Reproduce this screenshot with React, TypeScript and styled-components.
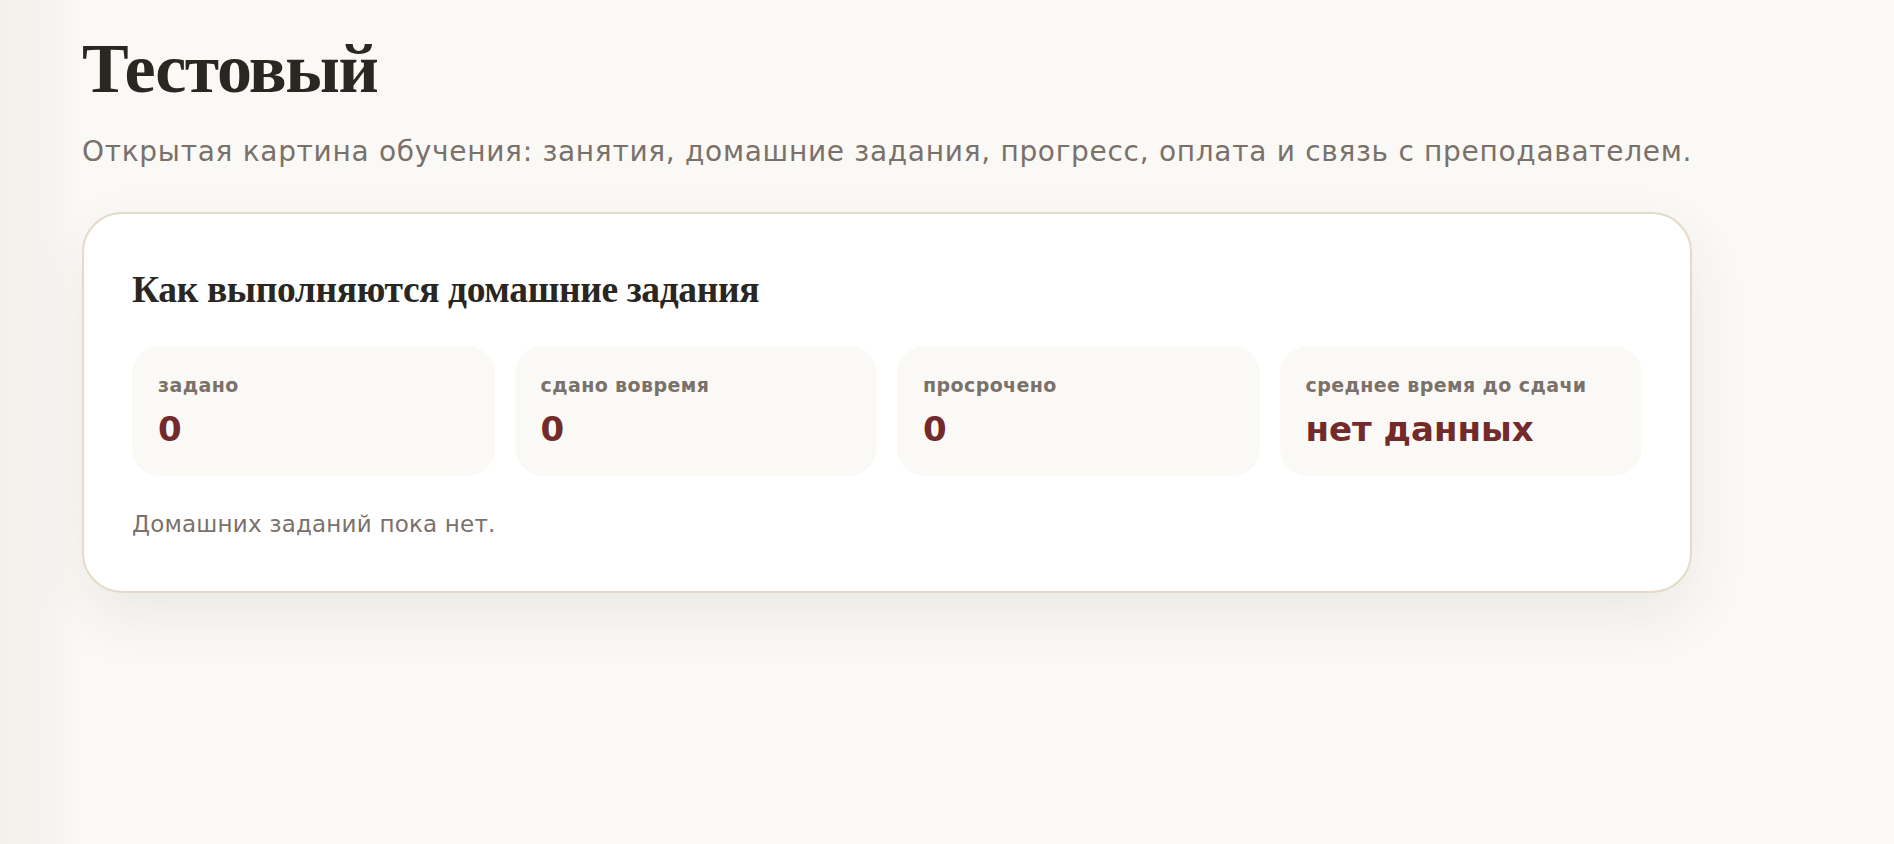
import styled, { createGlobalStyle } from 'styled-components';

const GlobalStyle = createGlobalStyle`
  html, body {
    margin: 0;
    padding: 0;
    min-height: 100%;
  }

  body {
    background: linear-gradient(90deg, #f3f1ec 0px, #f5f3ef 45px, #f9f8f4 72px, #faf9f6 84px, #faf9f6 100%);
    min-height: 844px;
    font-family: 'DejaVu Sans', 'Open Sans', sans-serif;
  }
`;

const Page = styled.main`
  padding: 30px 0 0 82px;
  width: 1610px;
`;

const Title = styled.h1`
  font-family: 'Liberation Serif', serif;
  font-size: 70px;
  font-weight: 700;
  letter-spacing: -0.02em;
  line-height: 1.1;
  color: #2a2621;
  margin: 0 0 27px;
`;

const Subtitle = styled.p`
  font-family: 'DejaVu Sans', sans-serif;
  font-size: 28px;
  letter-spacing: 0.7px;
  line-height: 36px;
  color: #7a716b;
  margin: 0 0 42px;
  white-space: nowrap;
`;

const Card = styled.section`
  background: #ffffff;
  border: 2px solid #e5dac7;
  border-radius: 40px;
  padding: 54px 48px 52px;
  box-shadow: 0 24px 60px rgba(60, 45, 25, 0.08);
`;

const CardTitle = styled.h2`
  font-family: 'Liberation Serif', serif;
  font-size: 37.5px;
  font-weight: 700;
  letter-spacing: -0.01em;
  line-height: 44px;
  color: #2a2621;
  margin: 0 0 34px;
`;

const Stats = styled.div`
  display: grid;
  grid-template-columns: repeat(4, 1fr);
  gap: 20px;
`;

const StatTile = styled.div`
  background: #faf9f6;
  border-radius: 28px;
  padding: 27px 26px 26px;
  display: flex;
  flex-direction: column;
  gap: 11px;
`;

const StatLabel = styled.span`
  font-family: 'DejaVu Sans', sans-serif;
  font-size: 19px;
  font-weight: 700;
  line-height: 24px;
  letter-spacing: 0.4px;
  color: #7a716b;
`;

const StatValue = styled.span`
  font-family: 'DejaVu Sans', sans-serif;
  font-size: 34px;
  font-weight: 700;
  line-height: 42px;
  color: #722a2a;
`;

const EmptyNote = styled.p`
  font-family: 'DejaVu Sans', sans-serif;
  font-size: 23px;
  letter-spacing: 0.2px;
  line-height: 30px;
  color: #7a716b;
  margin: 33px 0 0;
`;

const stats = [
  { label: 'задано', value: '0' },
  { label: 'сдано вовремя', value: '0' },
  { label: 'просрочено', value: '0' },
  { label: 'среднее время до сдачи', value: 'нет данных' },
];

const App = () => (
  <>
    <GlobalStyle />
    <Page>
      <Title>Тестовый</Title>
      <Subtitle>
        Открытая картина обучения: занятия, домашние задания, прогресс, оплата и связь с преподавателем.
      </Subtitle>
      <Card>
        <CardTitle>Как выполняются домашние задания</CardTitle>
        <Stats>
          {stats.map((s) => (
            <StatTile key={s.label}>
              <StatLabel>{s.label}</StatLabel>
              <StatValue>{s.value}</StatValue>
            </StatTile>
          ))}
        </Stats>
        <EmptyNote>Домашних заданий пока нет.</EmptyNote>
      </Card>
    </Page>
  </>
);

export default App;
